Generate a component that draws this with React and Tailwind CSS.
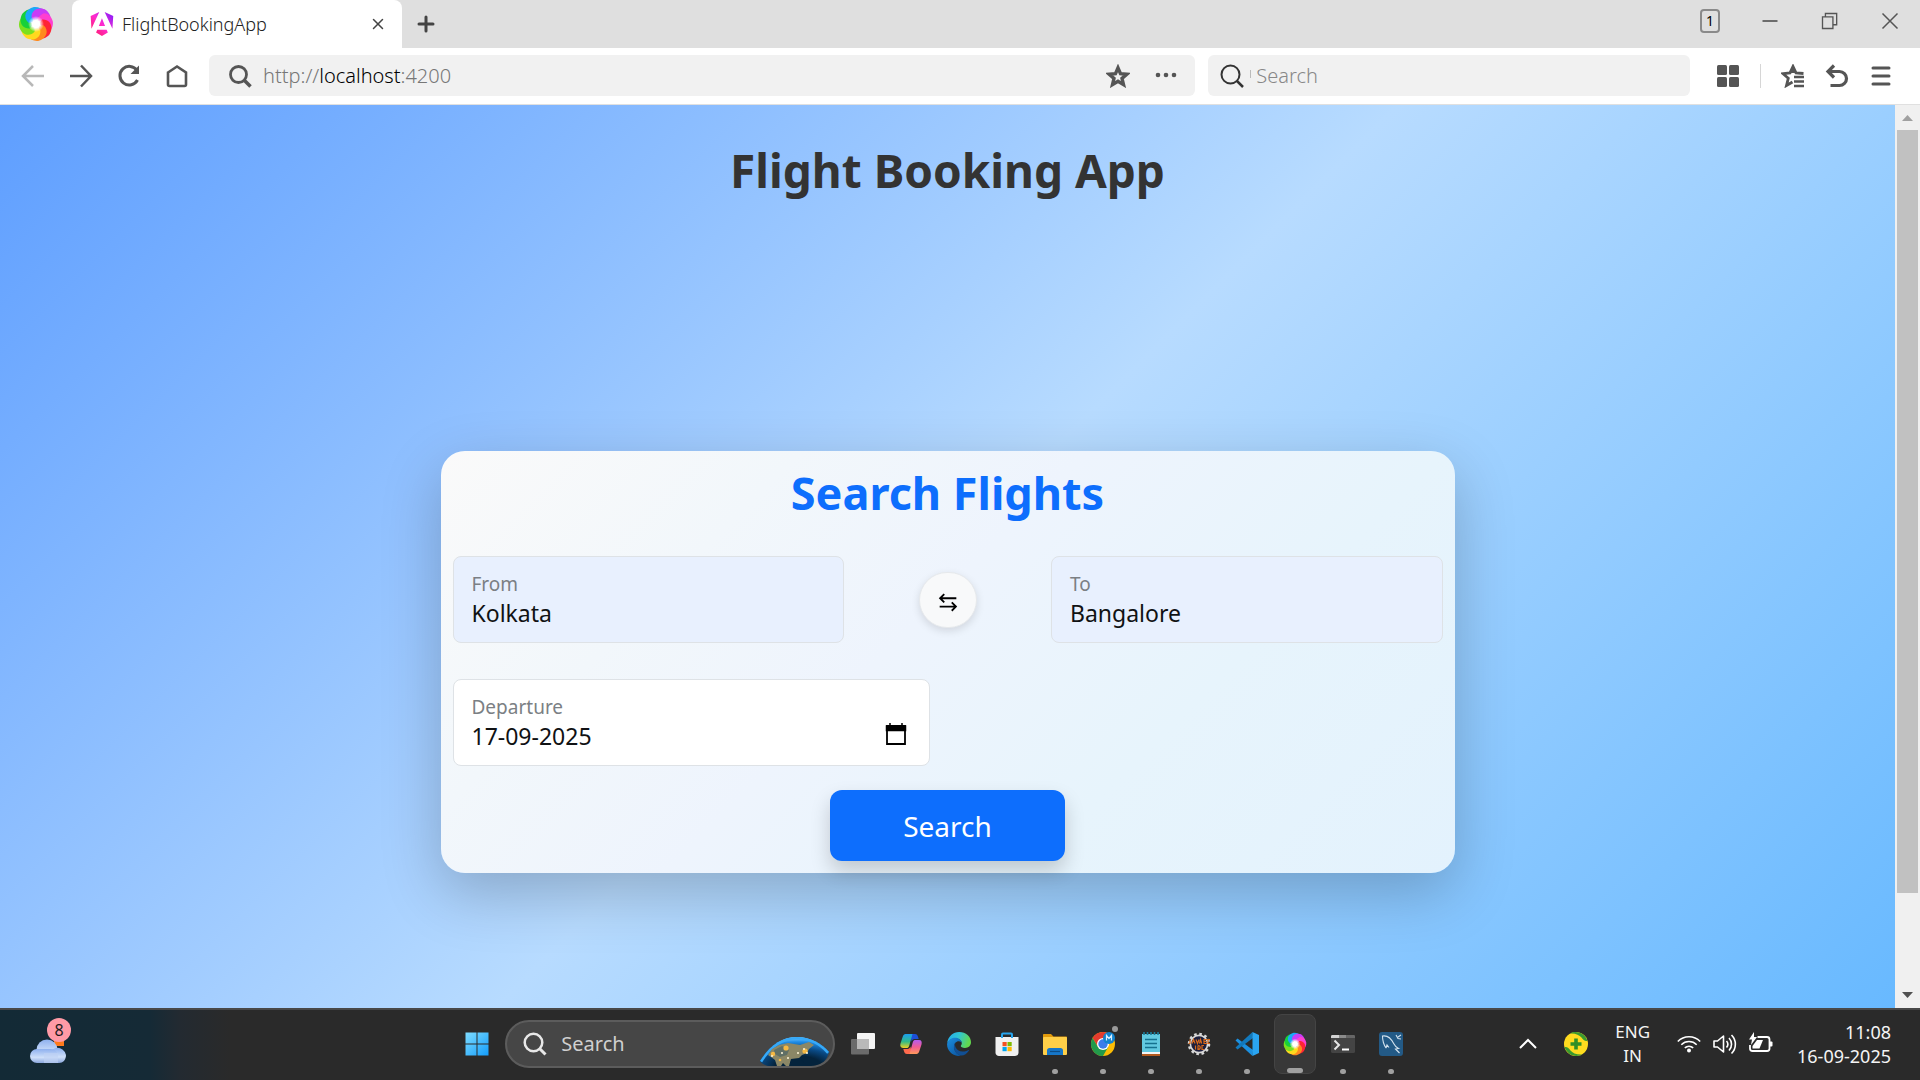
import React from "react";
import { Plus, X } from "lucide-react";

const SWIRL = ["#c93cf7", "#ff3fd0", "#ff2435", "#ff8a1e", "#ffd91e", "#7be01e", "#17d03a", "#1aa8f7"];

function SwirlLogo({ className, id }) {
  return (
    <svg viewBox="0 0 36 36" className={className} aria-hidden="true">
      <defs>
        <radialGradient id={id}>
          <stop offset="0.450" stopColor="#fff" />
          <stop offset="1" stopColor="#fff" stopOpacity="0" />
        </radialGradient>
      </defs>
      {SWIRL.map((color, i) => (
        <path
          key={color}
          d="M15 11C16 3 25 1 31 7C34 11 34 14 33 18C30 12 24 10 18 15Z"
          fill={color}
          transform={`rotate(${i * 45 - 12} 18 18)`}
        />
      ))}
      <path d="M15 11C16 3 25 1 31 7C30 9 24 9 18 15Z" fill="#c93cf7" transform="rotate(-12 18 18)" />
      <circle cx="18" cy="18" r="8" fill={`url(#${id})`} />
    </svg>
  );
}

function AngularLogo() {
  return (
    <svg viewBox="0 0 223 236" className="h-6 w-6 shrink-0" aria-hidden="true">
      <defs>
        <linearGradient id="ng" x1="0" y1="1" x2="1" y2="0">
          <stop offset="0" stopColor="#ff1a4f" />
          <stop offset="0.5" stopColor="#ff2bd0" />
          <stop offset="1" stopColor="#7a1cff" />
        </linearGradient>
      </defs>
      <path
        fill="url(#ng)"
        d="m222.077 39.192-8.019 125.923L137.387 0l84.69 39.192Zm-53.105 162.825-57.933 33.056-57.934-33.056 11.783-28.556h92.301l11.783 28.556ZM111.039 62.675l30.357 73.803H80.681l30.358-73.803ZM7.937 165.115 0 39.192 84.69 0 7.937 165.115Z"
      />
    </svg>
  );
}

function Line({ children, className = "h-6 w-6", width = 2.5, color = "#555" }) {
  return (
    <svg viewBox="0 0 24 24" className={className} fill="none" stroke={color} strokeWidth={width} aria-hidden="true">
      {children}
    </svg>
  );
}

function TabStrip() {
  return (
    <header className="flex h-12 items-stretch bg-[#dfdfdf]">
      <div className="flex w-[72px] items-center justify-center">
        <SwirlLogo className="h-9 w-9" id="swirl-top" />
      </div>
      <div className="flex w-[330px] items-center rounded-t-lg bg-white pl-[18px] pr-3">
        <AngularLogo />
        <span className="ml-2 flex-1 text-lg font-light text-[#222]">FlightBookingApp</span>
        <button type="button" aria-label="Close tab" className="flex h-6 w-6 items-center justify-center text-[#444]">
          <X size={18} strokeWidth={2} />
        </button>
      </div>
      <button type="button" aria-label="New tab" className="flex w-12 items-center justify-center text-[#444]">
        <Plus size={24} strokeWidth={3} />
      </button>
      <div className="ml-auto flex h-[42px] items-center">
        <div className="mr-5 flex h-6 w-5 items-center justify-center rounded border-2 border-[#8a8a8a] text-sm text-black">1</div>
        <button type="button" aria-label="Minimize" className="flex w-[60px] justify-center">
          <Line className="h-5 w-5" width={2}><path d="M3 12h18" /></Line>
        </button>
        <button type="button" aria-label="Restore" className="flex w-[60px] justify-center">
          <Line className="h-5 w-5" width={1.6}>
            <path d="M3 7h12.500v14H3zM6.500 7V3H20v13.500h-4.500" />
          </Line>
        </button>
        <button type="button" aria-label="Close window" className="flex w-[60px] justify-center">
          <Line className="h-5 w-5" width={1.8}><path d="M3 3l18 18M21 3L3 21" /></Line>
        </button>
      </div>
    </header>
  );
}

function NavButton({ label, children }) {
  return (
    <button type="button" aria-label={label} className="flex h-12 w-12 items-center justify-center">
      {children}
    </button>
  );
}

function Toolbar() {
  return (
    <div className="flex h-[57px] items-center border-b border-[#e0e0e0] bg-white pb-px pl-[9px] pr-[27px]">
      <NavButton label="Back"><Line color="#b8b8b8"><path d="M23 12H2M12 2L2 12l10 10" /></Line></NavButton>
      <NavButton label="Forward"><Line><path d="M1 12h21M12 1.500L22 12 12 22.500" /></Line></NavButton>
      <NavButton label="Reload">
        <Line width={3}>
          <path d="M20 6.500A9.300 9.300 0 1 0 20.500 16" />
          <path d="M22 1.500v8.500h-8.500z" fill="#555" stroke="none" />
        </Line>
      </NavButton>
      <NavButton label="Home"><Line width={2.6}><path d="M3 8.500L12 2.500l9 6V20.500a1.500 1.500 0 0 1-1.500 1.500h-15A1.500 1.500 0 0 1 3 20.500z" /></Line></NavButton>
      <div className="ml-2 flex h-[41px] min-w-0 flex-[979] items-center rounded-md bg-[#f1f1f1] pl-[19px] pr-[17px]">
        <Line width={2.8}><circle cx="10.500" cy="10.500" r="8" /><path d="M16 16l6.500 6.500" strokeWidth="3.500" /></Line>
        <div className="ml-[11px] flex-1 text-xl leading-6 font-light text-[#777]">
          http://<span className="text-black">localhost</span>:4200
        </div>
        <button type="button" aria-label="Bookmark page" className="mr-6">
          <Line width={3.4}><path d="M12 3.800l2.500 5.800 6.300.6-4.800 4.200 1.500 6.200-5.500-3.300L6.500 20.600 8 14.400 3.200 10.200l6.300-.6z" /></Line>
        </button>
        <button type="button" aria-label="Page options">
          <Line><g fill="#555" stroke="none"><circle cx="4" cy="11" r="2.300" /><circle cx="12" cy="11" r="2.300" /><circle cx="20" cy="11" r="2.300" /></g></Line>
        </button>
      </div>
      <label className="ml-[13px] flex h-[41px] min-w-0 flex-[484] items-center rounded-md bg-[#f1f1f1] pl-3">
        <Line width={2} color="#333"><circle cx="10.500" cy="10.500" r="9" /><path d="M17 17l6 6" strokeWidth="2.500" /></Line>
        <span className="ml-[6px] mr-[5px] mb-1 h-2 w-px bg-[#bbb]" />
        <input aria-label="Web search" placeholder="Search" className="min-w-0 flex-1 bg-transparent text-xl font-light outline-none placeholder:text-[#888]" />
      </label>
      <div className="ml-[26px] flex items-center">
        <button type="button" aria-label="Apps">
          <Line><g fill="#555" stroke="none"><rect x="1" y="1" width="10" height="10" rx="1.500" /><rect x="13" y="1" width="10" height="10" rx="1.500" /><rect x="1" y="13" width="10" height="10" rx="1.500" /><rect x="13" y="13" width="10" height="10" rx="1.500" /></g></Line>
        </button>
        <span className="mx-5 h-6 w-px bg-[#d6d6d6]" />
        <button type="button" aria-label="Favourites" className="mr-5">
          <Line width={2.8}>
            <path d="M22.500 9.500l-7.500-.6L12 2.500 9 8.900l-7 .8 5.300 4.600L5.500 21.500l6-3.500M12 3v6" />
            <path d="M13 13h10M13 17.500h10M13 22h10" strokeWidth="2.600" />
          </Line>
        </button>
        <button type="button" aria-label="Undo close" className="mr-5">
          <Line width={3.2}><path d="M4 7.500h10.500a6.800 6.800 0 0 1 0 14H5.500" /><path d="M9 1.500L3 7.500l6 6" /></Line>
        </button>
        <button type="button" aria-label="Menu">
          <Line width={3}><path d="M4 4h16M4 12h16M4 20h16" strokeLinecap="round" /></Line>
        </button>
      </div>
    </div>
  );
}

function Field({ id, label, value, className, children }) {
  return (
    <div className={`flex items-center rounded-lg border border-[#dee2e6] pb-3 pl-[18px] pr-[21px] pt-[15px] ${className}`}>
      <div className="min-w-0 flex-1">
        <label htmlFor={id} className="block h-6 text-[19px] leading-6 text-[#7b7f84]">{label}</label>
        <input id={id} defaultValue={value} className="block h-[34px] w-full bg-transparent text-[23px] text-[#101214] outline-none" />
      </div>
      {children}
    </div>
  );
}

function SearchCard() {
  return (
    <form
      className="mx-auto mt-[246px] w-full max-w-[1014px] rounded-3xl bg-[linear-gradient(135deg,#fafafa,#f2f7fb_25%,#eef4fd_45%,#e7f4fc_70%,#e3f2fd)] p-3 shadow-[0_20px_60px_rgba(0,0,0,0.22)]"
      onSubmit={(e) => e.preventDefault()}
    >
      <h2 className="text-center text-[45px] leading-[60px] font-bold text-[#0d6efd]">Search Flights</h2>
      <div className="mt-[33px] grid grid-cols-12 items-center gap-9">
        <Field id="from" label="From" value="Kolkata" className="col-span-5 bg-[#e8f0fe]" />
        <div className="col-span-2 flex justify-center">
          <button type="button" aria-label="Swap cities" className="flex h-14 w-[58px] items-center justify-center rounded-full border border-[#e6e9ec] bg-[#f8f9fa] pt-1 shadow-[0_3px_8px_rgba(0,0,0,0.12)]">
            <Line className="h-5 w-5" width={2.2} color="#000"><path d="M22 7.500H3M7.500 2.500l-5 5 5 5M2 17.500h19M16.500 12.500l5 5-5 5" /></Line>
          </button>
        </div>
        <Field id="to" label="To" value="Bangalore" className="col-span-5 bg-[#e8f0fe]" />
        <Field id="departure" label="Departure" value="17-09-2025" className="col-span-6 bg-white">
          <button type="button" aria-label="Open calendar" className="mt-5">
            <Line width={1.8} color="#000">
              <path d="M3 4h18v18H3z" /><path d="M2.500 4h19v4.500h-19zM6 1v3M18 1v3" fill="#000" strokeWidth="1.500" />
            </Line>
          </button>
        </Field>
      </div>
      <div className="mt-6 flex justify-center">
        <button type="submit" className="h-[71px] w-[235px] rounded-xl bg-[#0d6efd] text-[28px] text-white shadow-[0_10px_20px_rgba(0,0,0,0.18)]">Search</button>
      </div>
    </form>
  );
}

function Scrollbar() {
  return (
    <div className="flex w-[25px] flex-col items-center bg-[#f0f0f0]" aria-hidden="true">
      <svg viewBox="0 0 25 25" className="h-[25px] w-[25px]"><path d="M7 16l5.500-6 5.500 6z" fill="#a0a0a0" /></svg>
      <div className="w-[21px] flex-[763] bg-[#c1c1c1]" />
      <div className="flex-[90]" />
      <svg viewBox="0 0 25 25" className="h-[25px] w-[25px]"><path d="M7 9l5.500 6 5.500-6z" fill="#505050" /></svg>
    </div>
  );
}

function WeatherIcon() {
  return (
    <svg viewBox="0 0 36 30" className="h-[30px] w-9" aria-hidden="true">
      <defs>
        <linearGradient id="cloud" x1="0" y1="0" x2="0" y2="1">
          <stop offset="0" stopColor="#8eb0ee" /><stop offset="0.6" stopColor="#cfe0fa" /><stop offset="1" stopColor="#8ba7dd" />
        </linearGradient>
      </defs>
      <path d="M24 4h10v8H24z" fill="#ff7a1c" />
      <circle cx="17" cy="16" r="10.500" fill="url(#cloud)" />
      <path d="M19 24a8.500 8.500 0 0 1 17-3c0 5-3 8-7 8H14z" fill="url(#cloud)" />
      <rect x="0" y="15" width="28" height="14" rx="7" fill="url(#cloud)" />
      <path d="M14 19h14v10H14z" fill="#bfd2f4" opacity="0.600" />
    </svg>
  );
}

function WindowsIcon() {
  return (
    <svg viewBox="0 0 24 24" className="h-6 w-6">
      <defs><linearGradient id="win" x1="0" y1="0" x2="1" y2="1"><stop offset="0" stopColor="#7fdcff" /><stop offset="1" stopColor="#139dfb" /></linearGradient></defs>
      <path fill="url(#win)" d="M.5.500h11v11H.5zM12.500.500h11v11h-11zM.5 12.500h11v11H.5zM12.500 12.500h11v11h-11z" />
    </svg>
  );
}

function GlobeArt() {
  return (
    <svg viewBox="0 0 70 30" className="h-[30px] w-[70px]" aria-hidden="true">
      <defs>
        <radialGradient id="globe" cx="0.550" cy="1" r="0.950">
          <stop offset="0.350" stopColor="#04233c" /><stop offset="0.600" stopColor="#0a4a85" /><stop offset="0.850" stopColor="#1f8ee8" /><stop offset="1" stopColor="#7ccaff" />
        </radialGradient>
        <clipPath id="dome"><path d="M0 25C10 9 22 1 37 1C51 1 62 8 69 16C67 24 62 29 54 30H8C4 29 1 27 0 25Z" /></clipPath>
      </defs>
      <g clipPath="url(#dome)">
        <rect width="70" height="30" fill="url(#globe)" />
        <path d="M0 25C10 9 22 1 37 1C51 1 62 8 69 16" fill="none" stroke="#36a9f8" strokeWidth="5" />
        <path d="M8 19l4-6 7-4 9-2 12 2 9-3 5 3-5 4-2 4-5 2-3 3-8 1-2 7h-3l-3-3-2 3h-4l-2-6-4-3z" fill="#8b8766" />
        <path d="M14 14l8-4 7 4-2 5-7 2-5-3z" fill="#5f6f66" />
        <path d="M30 27l2-4 9 0 3 4 4 2H30z" fill="#04233c" />
        <g fill="#f5b944"><circle cx="13" cy="18" r="2.200" /><circle cx="26" cy="12" r="2.600" /><circle cx="45" cy="15" r="2.600" /><circle cx="20" cy="24" r="1.300" /></g>
        <g fill="#fff6d8"><circle cx="12" cy="20" r="1" /><circle cx="22" cy="17" r="1" /><circle cx="28" cy="22" r="1" /><circle cx="38" cy="17" r="1" /><circle cx="44" cy="13" r="1" /><circle cx="47" cy="17" r="1" /></g>
      </g>
    </svg>
  );
}

function TaskViewIcon() {
  return (
    <svg viewBox="0 0 24 24" className="h-6 w-6"><rect x="6" y="1" width="18" height="16" rx="1" fill="#f4f4f4" /><rect x="0" y="7" width="18" height="15.500" rx="1" fill="#777" opacity="0.850" /><rect x="6" y="7" width="12" height="10" fill="#b9b9b9" /></svg>
  );
}

function CopilotIcon() {
  return (
    <svg viewBox="0 0 24 24" className="h-6 w-6">
      <defs>
        <linearGradient id="cpa" x1="0" y1="0" x2="0" y2="1"><stop offset="0" stopColor="#1b9df0" /><stop offset="0.550" stopColor="#33bb86" /><stop offset="1" stopColor="#f2d021" /></linearGradient>
        <linearGradient id="cpb" x1="0" y1="0" x2="0" y2="1"><stop offset="0" stopColor="#b45cf0" /><stop offset="0.500" stopColor="#f25c93" /><stop offset="1" stopColor="#ff9a5a" /></linearGradient>
      </defs>
      <path d="M11 2h5c1.800 0 2.600 1.300 3 2.700l.7 2.300h-4.200c-1.600 0-2.500 1-2.900 2.400z" fill="#1c4fd8" />
      <path d="M6.500 2h7L10.200 13.700C9.800 15.500 8.800 16 7.500 16H4C1.500 16 .8 14 1.500 11.600L3.800 4.500C4.300 2.900 5.200 2 6.500 2z" fill="url(#cpa)" />
      <path d="M13 22H8c-1.800 0-2.600-1.300-3-2.700L4.300 17h4.200c1.600 0 2.500-1 2.900-2.400z" fill="#ff6a4d" />
      <path d="M17.500 22h-7l3.300-11.700C14.200 8.500 15.200 8 16.500 8H20c2.500 0 3.200 2 2.500 4.400l-2.300 7.100c-.5 1.600-1.400 2.500-2.700 2.500z" fill="url(#cpb)" />
    </svg>
  );
}

function EdgeIcon() {
  return (
    <svg viewBox="0 0 24 24" className="h-6 w-6">
      <defs>
        <linearGradient id="ea" x1="0" y1="0" x2="1" y2="0.300"><stop offset="0" stopColor="#23a9ee" /><stop offset="0.500" stopColor="#2fc5d4" /><stop offset="1" stopColor="#62d84e" /></linearGradient>
        <linearGradient id="eb" x1="0" y1="0" x2="0.700" y2="1"><stop offset="0" stopColor="#1c8fe0" /><stop offset="1" stopColor="#0c59a4" /></linearGradient>
      </defs>
      <path d="M.2 11C1 4.500 6 0 12.200 0 19 0 24 4.800 24 10.300c0 3.400-2.600 5.700-6 5.700-2.700 0-4.200-1-4.200-1.900 0-.7 1-1 1-3 0-2.300-2.300-4.600-6-4.600C4.500 6.500 1.500 8.500.2 11z" fill="url(#ea)" />
      <path d="M.1 12c.4-3.800 4-6.300 8-6.300 4.200 0 6.700 2.600 6.700 5.300-.5-1-1.600-1.800-3-1.800C9 9.200 7 11.500 7 14.700c0 4.200 3 7.800 7 8.800-1 .3-2 .5-3 .5C5 23.500-.2 18 .1 12z" fill="url(#eb)" />
      <path d="M8.500 10.800C7 14 9.500 19.500 15.500 19.500c3 0 5-1.200 6-1.600.5 0 .7.300.5.700C20 21.800 17 23.800 14 23.600 7 22.500 5.200 14 8.500 10.800z" fill="#114f94" />
    </svg>
  );
}

function StoreIcon() {
  return (
    <svg viewBox="0 0 24 24" className="h-6 w-6">
      <path d="M7 6V2.500C7 1.500 7.500 1.500 8 1.500h8c.5 0 1 0 1 1V6" fill="none" stroke="#27a5ee" strokeWidth="2" />
      <path d="M.5 5h23v15.500c0 2-1.500 3.500-3.500 3.500H4C2 24 .5 22.500.5 20.500z" fill="#f0f0f0" />
      <path d="M6 5V3h2v3H6zM16 3h2v3h-2z" fill="#27a5ee" />
      <path d="M7.500 10h4.200v4.200H7.500z" fill="#f25022" /><path d="M12.500 10h4.200v4.200h-4.200z" fill="#7fba00" /><path d="M7.500 15h4.200v4.200H7.500z" fill="#00a4ef" /><path d="M12.500 15h4.200v4.200h-4.200z" fill="#ffb900" />
    </svg>
  );
}

function FolderIcon() {
  return (
    <svg viewBox="0 0 24 24" className="h-6 w-6">
      <path d="M0 3c0-.6.400-1 1-1h7l2.500 2.500H23c.6 0 1 .4 1 1V10H0z" fill="#e19a0c" /><rect y="5" width="24" height="18" rx="1" fill="#ffcf48" />
      <path d="M4 23v-4.500C4 17 5 16 6.500 16h11c1.500 0 2.500 1 2.500 2.500V23z" fill="#1676c8" /><path d="M7 19.500h10" stroke="#0b4b85" strokeWidth="1.200" />
    </svg>
  );
}

function ChromeIcon() {
  return (
    <svg viewBox="0 0 24 24" className="h-6 w-6 overflow-visible">
      <circle cx="12" cy="12" r="12" fill="#fbbc05" />
      <path d="M12 6h10.400A12 12 0 0 0 1.600 6l5 8z" fill="#e33b2e" /><path d="M1.600 6A12 12 0 0 0 12 24l5.200-9L7 15z" fill="#229a4b" />
      <circle cx="12" cy="12" r="6" fill="#fff" /><circle cx="12" cy="12" r="4.700" fill="#3b7de9" />
      <circle cx="18" cy="6" r="6" fill="#1183cf" /><path d="M15.500 8.500v-5l2.500 3 2.500-3v5" fill="none" stroke="#d9efff" strokeWidth="1.200" />
      <circle cx="24" cy="-3" r="3" fill="#9a9a9a" />
    </svg>
  );
}

function NotepadIcon() {
  return (
    <svg viewBox="0 0 24 24" className="h-6 w-6">
      <rect x="3" y="20" width="18" height="4" fill="#b25a1e" /><rect x="3" y="19" width="18" height="3" fill="#f4f4f4" /><rect x="3" y="2" width="18" height="18" fill="#62c9e0" />
      <path d="M5 0v3M8.500 0v3M12 0v3M15.500 0v3M19 0v3" stroke="#1a7d9c" strokeWidth="1.600" /><path d="M6 7.500h12M6 11.500h12M6 15.500h12" stroke="#15728f" strokeWidth="1.500" />
    </svg>
  );
}

function GearIcon() {
  return (
    <svg viewBox="0 0 24 24" className="h-6 w-6">
      <circle cx="12" cy="12" r="10" fill="none" stroke="#d8d8d8" strokeWidth="2.500" strokeDasharray="2.600 2.636" />
      <circle cx="12" cy="12" r="8.600" fill="#1d1f3c" stroke="#d8d8d8" strokeWidth="1.600" />
      <g stroke="#d96a1c" strokeWidth="1.200" fill="none"><path d="M3 7.500v4H1.500M5 11.500l1.500-4 1.500 4M9 7.500l1.500 4 1.500-4M12.500 11.500l1-4 1.200 4M20 7.500h-3v4h3M17 9.500h2.500M23 7.500h-2v4h2M8.500 13.500v4M11 13.500v4c3 0 3-4 0-4M17 13.500h-2v4h2" /></g>
    </svg>
  );
}

function CodeIcon() {
  return (
    <svg viewBox="0 0 24 24" className="h-6 w-6">
      <path d="M17.500 24L.5 8.500 2.500 6.500 18 18z" fill="#1c90e0" />
      <path d="M17.500 0L.5 15.500 2.500 17.500 18 6z" fill="#1279bd" />
      <path d="M17.500 0L24 3v18l-6.500 3z" fill="#2aa5f2" />
    </svg>
  );
}

function TerminalIcon() {
  return (
    <svg viewBox="0 0 24 24" className="h-6 w-6">
      <rect y="3" width="24" height="18" rx="1.500" fill="#444" /><path d="M0 6V4.500C0 3.500.5 3 1.500 3H8v3z" fill="#d2d2d2" /><path d="M8 3h7v3H8z" fill="#8b8b8b" /><path d="M15 3h7.500c1 0 1.500.5 1.500 1.500V6h-9z" fill="#666" />
      <path d="M3.500 8.500L8 13l-4.500 4.500" fill="none" stroke="#e6e6e6" strokeWidth="2" /><path d="M11 17.500h7" stroke="#fff" strokeWidth="2" />
    </svg>
  );
}

function DolphinIcon() {
  return (
    <svg viewBox="0 0 24 24" className="h-6 w-6">
      <rect width="24" height="24" rx="3" fill="#235a86" />
      <path d="M7 16c-2-3-3.500-8-3.500-12 5-1 9 3 11.500 8 1.200 2.500 2.500 3.500 4.500 4.500l-3 .5 4 4M7 16l1-3 2 2.500M17 3l2 3.500 3 .5M22 3l-3 2" fill="none" stroke="#d3e2ee" strokeWidth="1.100" />
    </svg>
  );
}

const APPS = [
  { name: "Task view", icon: <TaskViewIcon /> },
  { name: "Copilot", icon: <CopilotIcon /> },
  { name: "Edge", icon: <EdgeIcon /> },
  { name: "Store", icon: <StoreIcon /> },
  { name: "File Explorer", icon: <FolderIcon />, running: true },
  { name: "Chrome", icon: <ChromeIcon />, running: true },
  { name: "Notepad", icon: <NotepadIcon />, running: true },
  { name: "Eclipse", icon: <GearIcon />, running: true },
  { name: "Code", icon: <CodeIcon />, running: true },
  { name: "Browser", icon: <SwirlLogo className="h-6 w-6" id="swirl-task" />, running: true, active: true },
  { name: "Terminal", icon: <TerminalIcon />, running: true },
  { name: "Workbench", icon: <DolphinIcon />, running: true },
];

function AppButton({ app }) {
  return (
    <button
      type="button"
      aria-label={app.name}
      className={`relative mx-[3px] flex h-[60px] w-[42px] items-center justify-center rounded-lg ${app.active ? "border border-[#444] bg-[#383838]" : ""}`}
    >
      {app.icon}
      {app.running && (
        <span className={`absolute bottom-0 h-[5px] rounded-full bg-[#a0a0a0] ${app.active ? "w-4" : "w-[6px]"}`} />
      )}
    </button>
  );
}

function Taskbar() {
  return (
    <footer className="flex h-[72px] items-center border-t-2 border-[#484848] bg-[linear-gradient(90deg,#132a36,#152a36_150px,#232a31_180px,#2a2a2a_230px)] pb-[2px] text-[#f4f4f4]">
      <div className="flex flex-[89_1_0%] items-center pl-[30px]">
        <div className="relative pt-[10px]">
          <WeatherIcon />
          <span className="absolute -top-[6px] left-[17px] flex h-6 w-6 items-center justify-center rounded-full bg-[#ff9aa6] text-base text-[#1c1c1c]">8</span>
        </div>
      </div>
      <div className="flex items-center">
        <button type="button" aria-label="Start" className="flex w-12 justify-center"><WindowsIcon /></button>
        <label className="mx-1 flex h-12 w-[330px] items-center overflow-hidden rounded-full border-2 border-[#5c5c5c] bg-[#464646] pl-4 pr-[3px]">
          <Line width={2.5} color="#e8e8e8"><circle cx="10.500" cy="10.500" r="8.800" /><path d="M17 17l5.500 5.500" strokeWidth="3" /></Line>
          <input aria-label="Search Windows" placeholder="Search" className="ml-[14px] min-w-0 flex-1 bg-transparent text-xl outline-none placeholder:text-[#d0d0d0]" />
          <span className="self-end"><GlobeArt /></span>
        </label>
        {APPS.map((app) => <AppButton key={app.name} app={app} />)}
      </div>
      <div className="flex flex-[100_1_0%] items-center justify-end pr-[29px]">
        <button type="button" aria-label="Hidden icons" className="mr-6"><Line width={2} color="#fff"><path d="M4 16l8-8 8 8" /></Line></button>
        <svg viewBox="0 0 24 24" className="mr-[27px] h-6 w-6" aria-hidden="true">
          <circle cx="12" cy="12" r="12" fill="#ffdc1f" />
          <path d="M6 1.500C12-2 21 1 23.500 9c-3 .5-4-1-6-3.500S11 1 6 1.500zM18 22.500C12 26 3 23 .5 15c3-.5 4 1 6 3.500s6.500 4.500 11.500 4z" fill="#3a9a2f" />
          <path d="M12 6.500v11M6.500 12h11" stroke="#2f8f26" strokeWidth="3.600" />
        </svg>
        <button type="button" className="mr-[27px] text-center text-[17px] leading-6">ENG<br />IN</button>
        <svg viewBox="0 0 24 24" className="mr-3 h-6 w-6" fill="none" stroke="#fff" strokeWidth="1.600" aria-hidden="true">
          <path d="M.8 9.500a15.500 15.500 0 0 1 22.400 0M4.300 12.700a11 11 0 0 1 15.400 0M7.800 15.900a6.500 6.500 0 0 1 8.400 0" /><circle cx="12" cy="18.500" r="2" fill="#fff" stroke="none" />
        </svg>
        <svg viewBox="0 0 24 24" className="mr-3 h-6 w-6" fill="none" stroke="#fff" strokeWidth="1.600" strokeLinejoin="round" aria-hidden="true">
          <path d="M1 9v6h3.500l6 5V4l-6 5zM13.500 9a5 5 0 0 1 0 6.500M16 6a9 9 0 0 1 0 12.500M18.500 3a13 13 0 0 1 0 18.500" />
        </svg>
        <svg viewBox="0 0 24 24" className="h-6 w-6" fill="none" stroke="#fff" strokeWidth="1.800" aria-hidden="true">
          <path d="M8.500 5H18a2.500 2.500 0 0 1 2.500 2.500v9A2.500 2.500 0 0 1 18 19H3.500A2.500 2.500 0 0 1 1 16.500V13" /><path d="M21 9.500h1.500a1 1 0 0 1 1 1v3a1 1 0 0 1-1 1H21z" fill="#fff" stroke="none" />
          <path d="M8 8h6l-3.500 8.500H3.500V14z" fill="#fff" stroke="none" /><path d="M5 0L0 7.500h3L2 13l6-8H5z" fill="#fff" stroke="none" />
        </svg>
        <button type="button" className="ml-6 text-right text-lg leading-6">11:08<br />16-09-2025</button>
      </div>
    </footer>
  );
}

export default function App() {
  return (
    <div className="flex min-h-screen flex-col font-['Noto_Sans',sans-serif]">
      <TabStrip />
      <Toolbar />
      <div className="flex flex-1 items-stretch">
        <main className="min-w-0 flex-1 bg-[linear-gradient(135deg,#5e9eff,#b7dbff_50%,#68b9ff)]">
          <h1 className="pt-[30px] text-center text-[46px] leading-[70px] font-bold text-[#333]">Flight Booking App</h1>
          <SearchCard />
        </main>
        <Scrollbar />
      </div>
      <Taskbar />
    </div>
  );
}
